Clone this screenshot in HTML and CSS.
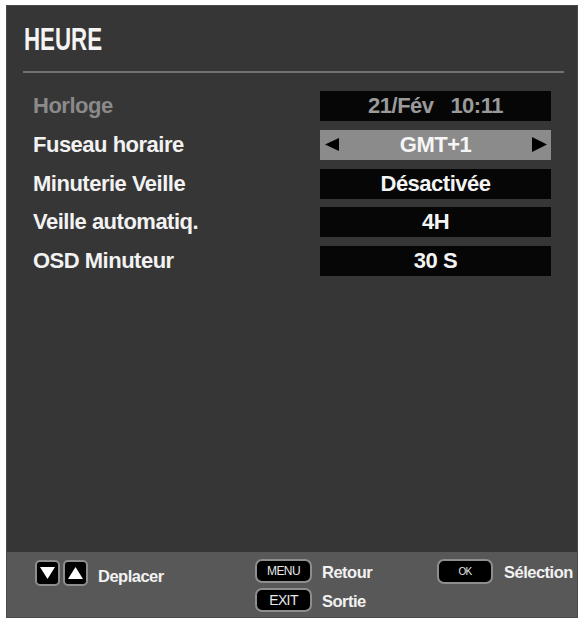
FILE: index.html
```html
<!DOCTYPE html>
<html lang="fr">
<head>
<meta charset="utf-8">
<title>HEURE</title>
<link rel="stylesheet" href="styles.css">
</head>
<body>
<div class="panel">
  <div class="header">
    <h1 class="title">HEURE</h1>
  </div>
  <div class="divider"></div>
  <div class="rows">
    <div class="label dim">Horloge</div>
    <div class="value dimtext">21/Fév&nbsp;&nbsp;&nbsp;10:11</div>

    <div class="label">Fuseau horaire</div>
    <div class="value selected">
      <svg class="arrow" width="16" height="15" viewBox="0 0 16 15"><polygon points="15,1 15,14 1,7.5" fill="#000"/></svg>
      <span class="vtext">GMT+1</span>
      <svg class="arrow" width="16" height="15" viewBox="0 0 16 15"><polygon points="1,0 1,15 16,7.5" fill="#000"/></svg>
    </div>

    <div class="label">Minuterie Veille</div>
    <div class="value">Désactivée</div>

    <div class="label">Veille automatiq.</div>
    <div class="value">4H</div>

    <div class="label">OSD Minuteur</div>
    <div class="value">30 S</div>
  </div>
  <div class="spacer"></div>
  <div class="footer">
    <div class="group g1">
      <span class="btn">
        <svg width="17" height="14" viewBox="0 0 17 14"><polygon points="1,1 16,1 8.5,13" fill="#fff"/></svg>
      </span>
      <span class="btn">
        <svg width="17" height="14" viewBox="0 0 17 14"><polygon points="8.5,1 16,13 1,13" fill="#fff"/></svg>
      </span>
      <span class="ftext">Deplacer</span>
    </div>
    <div class="group g2">
      <div class="keyrow">
        <span class="key">MENU</span>
        <span class="ftext">Retour</span>
      </div>
      <div class="keyrow">
        <span class="key exit">EXIT</span>
        <span class="ftext">Sortie</span>
      </div>
    </div>
    <div class="group g3">
      <span class="key ok">OK</span>
      <span class="ftext">Sélection</span>
    </div>
  </div>
</div>
</body>
</html>
```

FILE: styles.css
```css
* { box-sizing: border-box; }
html, body { margin: 0; padding: 0; background: #ffffff; }
body {
  font-family: "Liberation Sans", Arial, sans-serif;
  width: 584px;
  height: 624px;
  padding: 5px 6px 6px 6px;
}
.panel {
  width: 572px;
  height: 613px;
  background: #363636;
  border: 1px solid #4a4a4a;
  display: flex;
  flex-direction: column;
}
.header {
  padding: 19px 0 0 17px;
  height: 55px;
}
.title {
  margin: 0;
  font-size: 31px;
  line-height: 30px;
  font-weight: bold;
  color: #f4f4f4;
  transform: scaleX(0.72);
  transform-origin: left center;
  letter-spacing: 0;
}
.divider {
  margin: 10px 13px 0 16px;
  height: 2px;
  background: #727272;
}
.rows {
  margin-top: 18px;
  display: grid;
  grid-template-columns: 287px 231px;
  grid-auto-rows: 30px;
  row-gap: 8.75px;
  padding-left: 26px;
}
.label {
  font-size: 22px;
  font-weight: bold;
  letter-spacing: -0.5px;
  color: #f2f2f2;
  display: flex;
  align-items: center;
  white-space: nowrap;
}
.label.dim { color: #8a8a8a; }
.value {
  background: #060606;
  color: #f4f4f4;
  font-size: 22px;
  font-weight: bold;
  letter-spacing: -0.5px;
  display: flex;
  align-items: center;
  justify-content: center;
  white-space: nowrap;
}
.value.dimtext { color: #9a9a9a; }
.value.selected {
  background: #8b8b8b;
  justify-content: space-between;
  padding: 0 4px 0 4px;
}
.arrow { display: block; }
.vtext { color: #f6f6f6; }
.spacer { flex: 1; }
.footer {
  height: 65px;
  background: #585858;
  display: grid;
  grid-template-columns: 220px 182px 1fr;
  padding: 7px 0 0 28px;
  align-items: start;
}
.group { display: flex; align-items: center; }
.g1 { gap: 3px; }
.g1 .ftext { margin-left: 7px; margin-top: 8px; }
.btn {
  width: 25px;
  height: 26px;
  background: #000;
  border: 2px solid #8e8e8e;
  border-radius: 5px;
  display: flex;
  align-items: center;
  justify-content: center;
}
.btn svg { display: block; }
.ftext {
  font-size: 16.5px;
  font-weight: bold;
  color: #f2f2f2;
  letter-spacing: -0.5px;
  white-space: nowrap;
}
.g2 { flex-direction: column; align-items: flex-start; gap: 5px; }
.keyrow { display: flex; align-items: center; gap: 10px; }
.keyrow .ftext { margin-top: 3px; }
.key {
  width: 57px;
  height: 24px;
  background: #000;
  border: 2px solid #8e8e8e;
  border-radius: 7px;
  color: #e8e8e8;
  font-size: 12px;
  display: flex;
  align-items: center;
  justify-content: center;
  letter-spacing: -0.6px;
}
.key.exit { font-size: 14px; }
.g3 { gap: 11px; }
.g3 .ftext { margin-top: 2px; }
.key.ok {
  width: 56px;
  height: 25px;
  font-size: 10px;
  align-items: flex-start;
  padding-top: 5px;
}
```
